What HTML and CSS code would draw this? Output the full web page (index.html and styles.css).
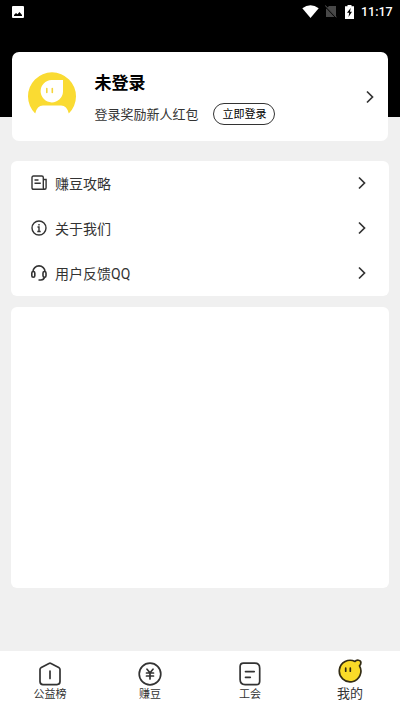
FILE: index.html
```html
<!DOCTYPE html>
<html lang="zh-CN">
<head>
<meta charset="utf-8">
<title>我的</title>
<link rel="stylesheet" href="styles.css">
</head>
<body>
<div class="screen">
  <header class="top">
    <div class="status">
      <svg class="status-photo" width="12" height="12" viewBox="0 0 12 12"><rect width="12" height="12" rx="1" fill="#fff"/><path d="M2 10V9l2-2 1.500 1.200L7.500 6 10 9v1z" fill="#000"/></svg>
      <svg class="wifi" width="17" height="13" viewBox="0 0 17 13"><path d="M.3 3.200Q8.500-2.800 16.700 3.200L8.500 13z" fill="#fff"/></svg>
      <svg class="sim" width="12" height="13" viewBox="0 0 12 13"><path d="M4 1h7v11H1V4z" fill="#484848"/><path d="M0 1l11 11.500" stroke="#000" stroke-width="1.500"/><path d="M0 .3l11.500 12" stroke="#5c5c5c"/></svg>
      <svg class="battery" width="9" height="14" viewBox="0 0 9 14"><path d="M2.500 0h4v1.200H9V14H0V1.200h2.500z" fill="#fff"/><path d="M5.700 3L2 7.700h2.200L3.500 12 7 6.700H5z" fill="#000"/></svg>
      <span class="time">11:17</span>
    </div>
  </header>
  <main class="content">
    <section class="profile">
      <svg class="avatar" width="48" height="48" viewBox="0 0 48 48">
        <path d="M7.200 43.500A24 24 0 1 1 40.800 43.500Q39 35.500 33 35.500H15Q9 35.500 7.200 43.500z" fill="#fadb32"/>
        <path d="M35 10v11.500A11.200 11.200 0 1 1 23.500 10z" fill="#fff"/>
        <path d="M18.800 18.500v4M24.300 18.500v4" stroke="#f5d53a" stroke-width="1.600" stroke-linecap="round"/>
      </svg>
      <div class="account">
        <h1 class="name">未登录</h1>
        <div class="login-row"><span class="hint">登录奖励新人红包</span><button class="login">立即登录</button></div>
      </div>
      <svg class="chevron" width="8" height="14" viewBox="0 0 8 14"><path d="M1 1.500L6.500 7 1 12.500"/></svg>
    </section>
    <section class="menu">
      <div class="row">
        <svg class="icon" width="16" height="16" viewBox="0 0 16 16"><path d="M12.300 14.300H2.500Q1 14.300 1 12.800V2.500Q1 1 2.500 1h8.300q1.500 0 1.500 1.500v10.300q0 1.500 1.400 1.500t1.400-1.500V4.500h-2.500M3.500 5h4M3.500 8.300h6.300"/></svg>
        <span class="label">赚豆攻略</span>
        <svg class="chevron" width="8" height="14" viewBox="0 0 8 14"><path d="M1 1.500L6.500 7 1 12.500"/></svg>
      </div>
      <div class="row">
        <svg class="icon" width="16" height="16" viewBox="0 0 16 16"><circle cx="8" cy="8" r="7"/><path d="M6.500 7H8v4.500M6.300 11.500h3.400M8 4v1.500"/></svg>
        <span class="label">关于我们</span>
        <svg class="chevron" width="8" height="14" viewBox="0 0 8 14"><path d="M1 1.500L6.500 7 1 12.500"/></svg>
      </div>
      <div class="row">
        <svg class="icon headset" width="16" height="16" viewBox="0 0 16 16"><path d="M2 6.500a6 5.600 0 0 1 12 0M13.700 12q-1 3-3.700 3H7.500"/><rect x=".8" y="6.500" width="3" height="5.700" rx="1.500"/><rect x="12" y="6.500" width="3" height="5.700" rx="1.500"/></svg>
        <span class="label">用户反馈QQ</span>
        <svg class="chevron" width="8" height="14" viewBox="0 0 8 14"><path d="M1 1.500L6.500 7 1 12.500"/></svg>
      </div>
    </section>
    <section class="panel"></section>
  </main>
  <nav class="tabs">
    <div class="tab">
      <svg class="tab-icon" width="24" height="24" viewBox="0 0 24 24"><path d="M11 1.400q1-.5 2 0l7.700 4q1.300.7 1.300 2v12.200q0 3-3 3H5q-3 0-3-3V7.400q0-1.300 1.300-2zM12 9v7.500"/></svg>
      <span>公益榜</span>
    </div>
    <div class="tab">
      <svg class="tab-icon" width="24" height="24" viewBox="0 0 24 24"><circle cx="12" cy="12" r="10.800"/><path d="M9 7.200l3 3.500 3-3.500M8.500 11h7M8.500 14h7M12 10.700V17"/></svg>
      <span>赚豆</span>
    </div>
    <div class="tab">
      <svg class="tab-icon" width="24" height="24" viewBox="0 0 24 24"><path d="M5.500 1.200h11.200q5 0 5 5v13q0 3.400-3.400 3.400H7.100q-5 0-5-5v-13q0-3.400 3.400-3.400zM7.500 9.600h8.700M7.500 15.300h4.800"/></svg>
      <span>工会</span>
    </div>
    <div class="tab active">
      <svg class="tab-icon" width="24" height="24" viewBox="0 0 24 24"><path class="face" d="M17 2.500C18.500.5 22.900.8 22.900 3.800q0 1.700-1.400 3A10.800 10.800 0 1 1 17 2.500z"/><path class="eyes" d="M7.700 9.200v3M12.300 9.200v3"/></svg>
      <span>我的</span>
    </div>
  </nav>
</div>
</body>
</html>
```

FILE: styles.css
```css
* { box-sizing: border-box; }
body {
  margin: 0;
  background: #f0f0f0;
  color: #333;
  font-family: Roboto, "Noto Sans CJK SC", sans-serif;
}
svg { display: block; flex: none; fill: none; }
.screen { height: 711px; display: flex; flex-direction: column; overflow: hidden; }
.top { height: 117px; background: #000; flex: none; }
.status { height: 23px; display: flex; align-items: center; padding: 0 8px 0 12px; }
.status-photo { margin-right: auto; }
.wifi { margin-right: 6px; }
.sim { margin-right: 8px; }
.battery { margin-right: 7px; }
.time { width: 31px; color: #fff; font-size: 12.500px; font-weight: 500; line-height: 23px; white-space: nowrap; }
.content { flex: 1; margin-top: -64.600px; padding: 0 11px; }
.profile {
  height: 88.600px;
  margin: 0 1.400px;
  padding: 0 14px 0 16px;
  display: flex;
  align-items: center;
  background: #fff;
  border-radius: 7px;
}
.avatar { margin-top: -4.500px; }
.account { margin-left: 18px; margin-right: auto; height: 61.600px; }
.name { margin: 3px 0 6px; font-size: 17px; line-height: 28px; font-weight: 700; color: #000; }
.login-row { display: flex; align-items: center; height: 22px; }
.hint { font-size: 13px; line-height: 22px; padding-top: 2px; }
.login {
  width: 62px;
  height: 22px;
  margin-left: 15px;
  padding: 1px 0 0;
  border: 1px solid #333;
  border-radius: 11px;
  background: #fff;
  color: #000;
  font: 400 11px/19px Roboto, "Noto Sans CJK SC", sans-serif;
}
.chevron { stroke: #333; stroke-width: 1.700; }
.menu { height: 135px; margin-top: 20px; background: #fff; border-radius: 6px; }
.row { height: 45px; padding: 0 23px 0 20px; display: flex; align-items: center; }
.row .chevron { margin-top: -2px; }
.icon { stroke: #333; stroke-width: 1.400; margin-top: -1px; }
.headset { stroke-width: 1.600; }
.label { margin: 1px auto 0 8px; font-size: 14px; line-height: 22px; }
.panel { height: 281px; margin-top: 11px; background: #fff; border-radius: 6px; }
.tabs { height: 60px; flex: none; display: flex; background: #fff; }
.tab { flex: 1; display: flex; flex-direction: column; align-items: center; padding-top: 10.500px; font-size: 11px; line-height: 18px; }
.tab-icon { stroke: #333; stroke-width: 1.700; stroke-linecap: round; stroke-linejoin: round; margin-left: -1px; }
.active { padding-top: 8px; font-size: 13px; line-height: 22px; }
.face { fill: #fadb28; stroke: #332c14; }
.eyes { stroke: #332c14; }
```
